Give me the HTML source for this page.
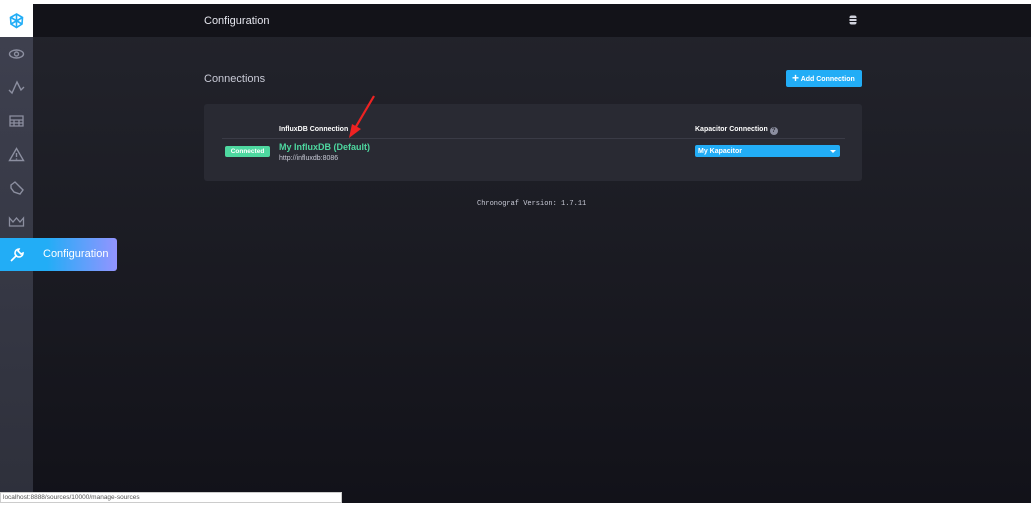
<!DOCTYPE html>
<html><head><style>
body{margin:0;width:1034px;height:506px;background:#fff;position:relative;overflow:hidden;font-family:"Liberation Sans",sans-serif}
.app{position:absolute;left:0;top:4px;width:1031px;height:499px;background:linear-gradient(#23242c,#121219)}
.side{position:absolute;left:0;top:0;width:33px;height:499px;background:linear-gradient(#3f4150,#2e303b)}
.logo{position:absolute;left:0;top:0;width:33px;height:33px;background:#fff}
.hdr{position:absolute;left:33px;top:0;right:0;height:33px;background:#131319}
.t{position:absolute;color:#fff}
.ic{position:absolute;left:8px}
</style></head><body>
<div class="app">
<div class="side">
<div class="logo"><svg width="33" height="33"><g fill="none" stroke="#22adf6" stroke-width="1.6"><polygon points="16.5,10 22.5,13.5 22,20 16.5,23.5 11,20 10.5,13.5"/><path d="M11 13.5l11 6.5M22.5 13.5L11 20M16.5 10v13.5"/></g></svg></div>
<svg class="ic" style="top:43px" width="17" height="14"><ellipse cx="8.5" cy="7" rx="7" ry="4" fill="none" stroke="#8c8fa0" stroke-width="1.4"/><circle cx="8.5" cy="7" r="2" fill="none" stroke="#8c8fa0" stroke-width="1.4"/></svg>
<svg class="ic" style="top:76px" width="17" height="16"><path d="M1 10l3 3 5-11 4 8 3-3" fill="none" stroke="#8c8fa0" stroke-width="1.4"/></svg>
<svg class="ic" style="top:110px" width="17" height="14"><path d="M2 2h13v10H2zM2 6h13M6 6v6M11 6v6M2 9h13" fill="none" stroke="#8c8fa0" stroke-width="1.3"/></svg>
<svg class="ic" style="top:143px" width="17" height="15"><path d="M8.5 1.5L15.5 13.5H1.5z M8.5 6v4M8.5 11.5v1" fill="none" stroke="#8c8fa0" stroke-width="1.4"/></svg>
<svg class="ic" style="top:176px" width="17" height="16"><path d="M3 5l4-3 8 8-3 4-6-2-3-4z" fill="none" stroke="#8c8fa0" stroke-width="1.4"/></svg>
<svg class="ic" style="top:212px" width="17" height="12"><path d="M1.5 2l3.5 4 3.5-4 3.5 4 3.5-4v8h-14z" fill="none" stroke="#8c8fa0" stroke-width="1.3"/></svg>
</div>
<div style="position:absolute;left:0;top:234px;width:117px;height:33px;background:linear-gradient(90deg,#22adf6,#22adf6 40%,#9394ff);border-radius:0 3px 3px 0">
<svg style="position:absolute;left:9px;top:9px" width="16" height="16"><path d="M2 14l6-6M10 2a4 4 0 1 0 4 4l-2 1-3-3z" fill="none" stroke="#fff" stroke-width="1.6"/></svg>
<div class="t" style="left:43px;top:10px;font-size:11px">Configuration</div></div>
<div class="hdr"><div class="t" style="left:171px;top:11px;font-size:11px;color:#e5e6ee">Configuration</div>
<svg style="position:absolute;left:816px;top:11px" width="8" height="10"><rect x="0.5" y="0.5" width="7" height="9" rx="2" fill="#d0d2dc"/><path d="M0 3.5h8M0 6.5h8" stroke="#131319"/></svg></div>
<div class="t" style="left:204px;top:69px;font-size:11px;color:#c8cad6">Connections</div>
<div style="position:absolute;left:786px;top:66px;width:76px;height:17px;background:#22adf6;border-radius:2px;color:#fff;font-size:7px;font-weight:bold;line-height:17px"><span style="font-size:12px;margin-left:6px;vertical-align:-1px">+</span> Add Connection</div>
<div style="position:absolute;left:204px;top:100px;width:658px;height:77px;background:#292a33;border-radius:3px">
<div class="t" style="left:75px;top:22px;font-size:7px;font-weight:bold">InfluxDB Connection</div>
<div class="t" style="left:491px;top:22px;font-size:7px;font-weight:bold">Kapacitor Connection <span style="display:inline-block;width:8px;height:8px;border-radius:50%;background:#8c8fa0;color:#292a33;text-align:center;font-size:6px;line-height:8px;vertical-align:-1px">?</span></div>
<div style="position:absolute;left:18px;top:34px;width:623px;height:1px;background:#3a3b46"></div>
<div style="position:absolute;left:21px;top:42px;width:45px;height:11px;background:#4ed8a0;border-radius:2px;color:#fff;font-size:6.5px;font-weight:bold;text-align:center;line-height:11px">Connected</div>
<div class="t" style="left:75px;top:38px;font-size:9px;font-weight:bold;color:#4ed8a0">My InfluxDB (Default)</div>
<div class="t" style="left:75px;top:51px;font-size:7px;color:#c8cad6">http://influxdb:8086</div>
<div style="position:absolute;left:491px;top:41px;width:145px;height:12px;background:#22adf6;border-radius:2px;color:#fff;font-size:7px;font-weight:bold;line-height:13px;padding-left:3px;box-sizing:border-box">My Kapacitor<span style="position:absolute;right:4px;top:5px;border:3px solid transparent;border-top:3px solid #fff;width:0;height:0"></span></div>
</div>
<svg style="position:absolute;left:340px;top:88px" width="40" height="50"><path d="M34 4L14 38" stroke="#e22" stroke-width="2.2"/><path d="M9 46l3-14 9 5z" fill="#e22"/></svg>
<div class="t" style="left:477px;top:196px;font-size:7px;font-family:'Liberation Mono',monospace;color:#c8cad6">Chronograf Version: 1.7.11</div>
</div>
<div style="position:absolute;left:0;top:492px;width:342px;height:11px;background:#fff;border:1px solid #ccc;box-sizing:border-box;font-size:6.5px;color:#555;line-height:9px;padding-left:2px">localhost:8888/sources/10000/manage-sources</div>
</body></html>
